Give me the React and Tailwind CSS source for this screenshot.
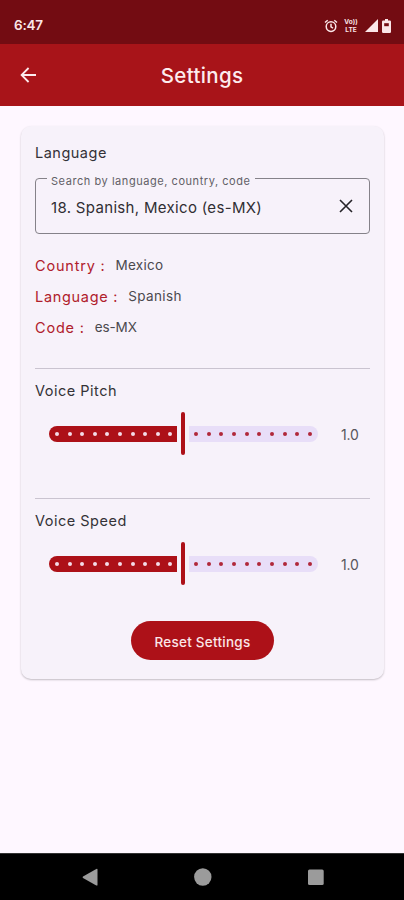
const STEPS = Array.from({ length: 10 }, (_, i) => i);

function StatusBar() {
  return (
    <div className="flex h-[44px] items-center bg-[#730c12] pt-[7px] pl-[14px] pr-[13px] text-[#fbe6e8]">
      <span className="flex-1 text-[13.5px] leading-none font-semibold tracking-[-0.2px]">6:47</span>
      <svg width="14" height="14" viewBox="0 0 14 14" fill="none" stroke="currentColor" strokeWidth="1.5">
        <circle cx="7" cy="7.6" r="4.8" />
        <path d="M7 4.8v3l2 1.3M1 3.5 3.7 1.2M13 3.5 10.3 1.2" />
      </svg>
      <div className="ml-[6px] flex w-[14px] flex-col items-center text-[6.5px] leading-[8px] font-bold">
        <span className="h-[8px]">Vo))</span>
        <span className="h-[8px]">LTE</span>
      </div>
      <svg className="ml-[7px]" width="13" height="13" viewBox="0 0 13 13" fill="currentColor">
        <path d="M13 0v13H0z" />
      </svg>
      <svg className="ml-[4px]" width="9" height="14" viewBox="0 0 9 14">
        <path fill="currentColor" d="M3 0h3v1.6h1.8Q9 1.6 9 2.8v10Q9 14 7.8 14H1.2Q0 14 0 12.8v-10Q0 1.6 1.2 1.6H3z" />
        <path fill="#730c12" d="M2.2 4.2h4.6v3H2.2z" />
      </svg>
    </div>
  );
}

function AppBar() {
  return (
    <header className="grid h-[62px] grid-cols-[60px_1fr_60px] items-center bg-[#a81419] text-[#fdecee]">
      <svg className="ml-[20px]" width="17" height="16" viewBox="0 0 17 16" fill="none" stroke="currentColor" strokeWidth="1.8">
        <path d="M16 8H1.8M8.6 1 1.6 8l7 7" />
      </svg>
      <h1 className="pt-[3px] text-center text-[20.5px] leading-none font-medium tracking-[0.35px]">Settings</h1>
    </header>
  );
}

function Detail({ label, value, labelClass, valueClass }) {
  return (
    <div className="flex h-[31px] items-center gap-[10px]">
      <span className={`text-[14.5px] text-[#b0202b] ${labelClass}`}>{label} :</span>
      <span className={`text-[13.5px] text-[#4b494e] ${valueClass}`}>{value}</span>
    </div>
  );
}

function Slider() {
  return (
    <div className="flex h-[43px] items-center">
      <div className="ml-[14px] flex h-[16px] w-[128px] items-center justify-between rounded-l-full rounded-r-[1px] bg-[#ad1118] pr-[4.5px] pl-[6px]">
        {STEPS.map((i) => <i key={i} className="size-[4px] rounded-full bg-[#f4dce8]" />)}
      </div>
      <div className="mx-[4px] h-[43px] w-[4px] rounded-full bg-[#ad1118]" />
      <div className="flex h-[16px] w-[129px] items-center justify-between rounded-l-[1px] rounded-r-full bg-[#e8def8] pr-[6px] pl-[5px]">
        {STEPS.map((i) => <i key={i} className="size-[4px] rounded-full bg-[#b0283a]" />)}
      </div>
      <span className="ml-[23px] pt-px text-[14px] tracking-[-0.2px] text-[#58565b]">1.0</span>
    </div>
  );
}

export default function App() {
  return (
    <div className="flex h-[900px] w-[404px] flex-col overflow-hidden bg-[#fef7ff] font-['Inter',sans-serif]">
      <StatusBar />
      <AppBar />
      <main className="flex-1 pr-[20px] pl-[21px] pt-[20px]">
        <section className="h-[553px] rounded-[10px] bg-[#f7f2fa] px-[14px] pt-[17px] shadow-[0_1px_2px_rgba(0,0,0,0.24)]">
          <h2 className="h-[20px] text-[14.5px] leading-[20px] tracking-[0.5px] text-[#343237]">Language</h2>
          <div className="relative mt-[15px] flex h-[56px] items-center rounded-[4px] border border-[#858289] pr-[16px] pl-[15px]">
            <label className="absolute -top-[6px] left-[11px] bg-[#f7f2fa] px-[4px] text-[11px] leading-[16px] tracking-[0.55px] whitespace-nowrap text-[#625f66]">Search by language, country, code</label>
            <span className="flex-1 pt-[4px] text-[15px] tracking-[0.32px] text-[#302e33]">18. Spanish, Mexico (es-MX)</span>
            <svg width="14" height="14" viewBox="0 0 14 14" fill="none" stroke="#252328" strokeWidth="1.6">
              <path d="m1 1 12 12M13 1 1 13" />
            </svg>
          </div>
          <div className="mt-[16px]">
            <Detail label="Country" value="Mexico" labelClass="tracking-[0.8px]" valueClass="tracking-[0.3px]" />
            <Detail label="Language" value="Spanish" labelClass="tracking-[0.7px]" valueClass="tracking-[0.4px]" />
            <Detail label="Code" value="es-MX" labelClass="tracking-[0.8px]" valueClass="tracking-[-0.1px]" />
          </div>
          <div className="mt-[25px] h-px bg-[#cac4d0]" />
          <h2 className="mt-[12px] h-[20px] text-[14.5px] leading-[20px] tracking-[0.5px] text-[#343237]">Voice Pitch</h2>
          <div className="mt-[11px]"><Slider /></div>
          <div className="mt-[43px] h-px bg-[#cac4d0]" />
          <h2 className="mt-[12px] h-[20px] text-[14.5px] leading-[20px] tracking-[0.5px] text-[#343237]">Voice Speed</h2>
          <div className="mt-[11px]"><Slider /></div>
          <button className="mx-auto mt-[36px] block h-[39px] w-[143px] rounded-full bg-[#ad1118] pt-[4px] text-[13.5px] font-medium tracking-[0.25px] text-[#fbe6e8]">Reset Settings</button>
        </section>
      </main>
      <nav className="h-[47px] border-t border-[#333] bg-black">
        <svg width="404" height="46" viewBox="0 0 404 46" fill="#9b9b9b">
          <path d="M83 22.4 96.3 15q1.2-.6 1.2.7v15q0 1.3-1.2.7L83 24q-.9-.8 0-1.6z" />
          <circle cx="202.8" cy="23" r="8.7" />
          <rect x="308" y="15.5" width="15.7" height="15.5" rx="1.5" />
        </svg>
      </nav>
    </div>
  );
}
